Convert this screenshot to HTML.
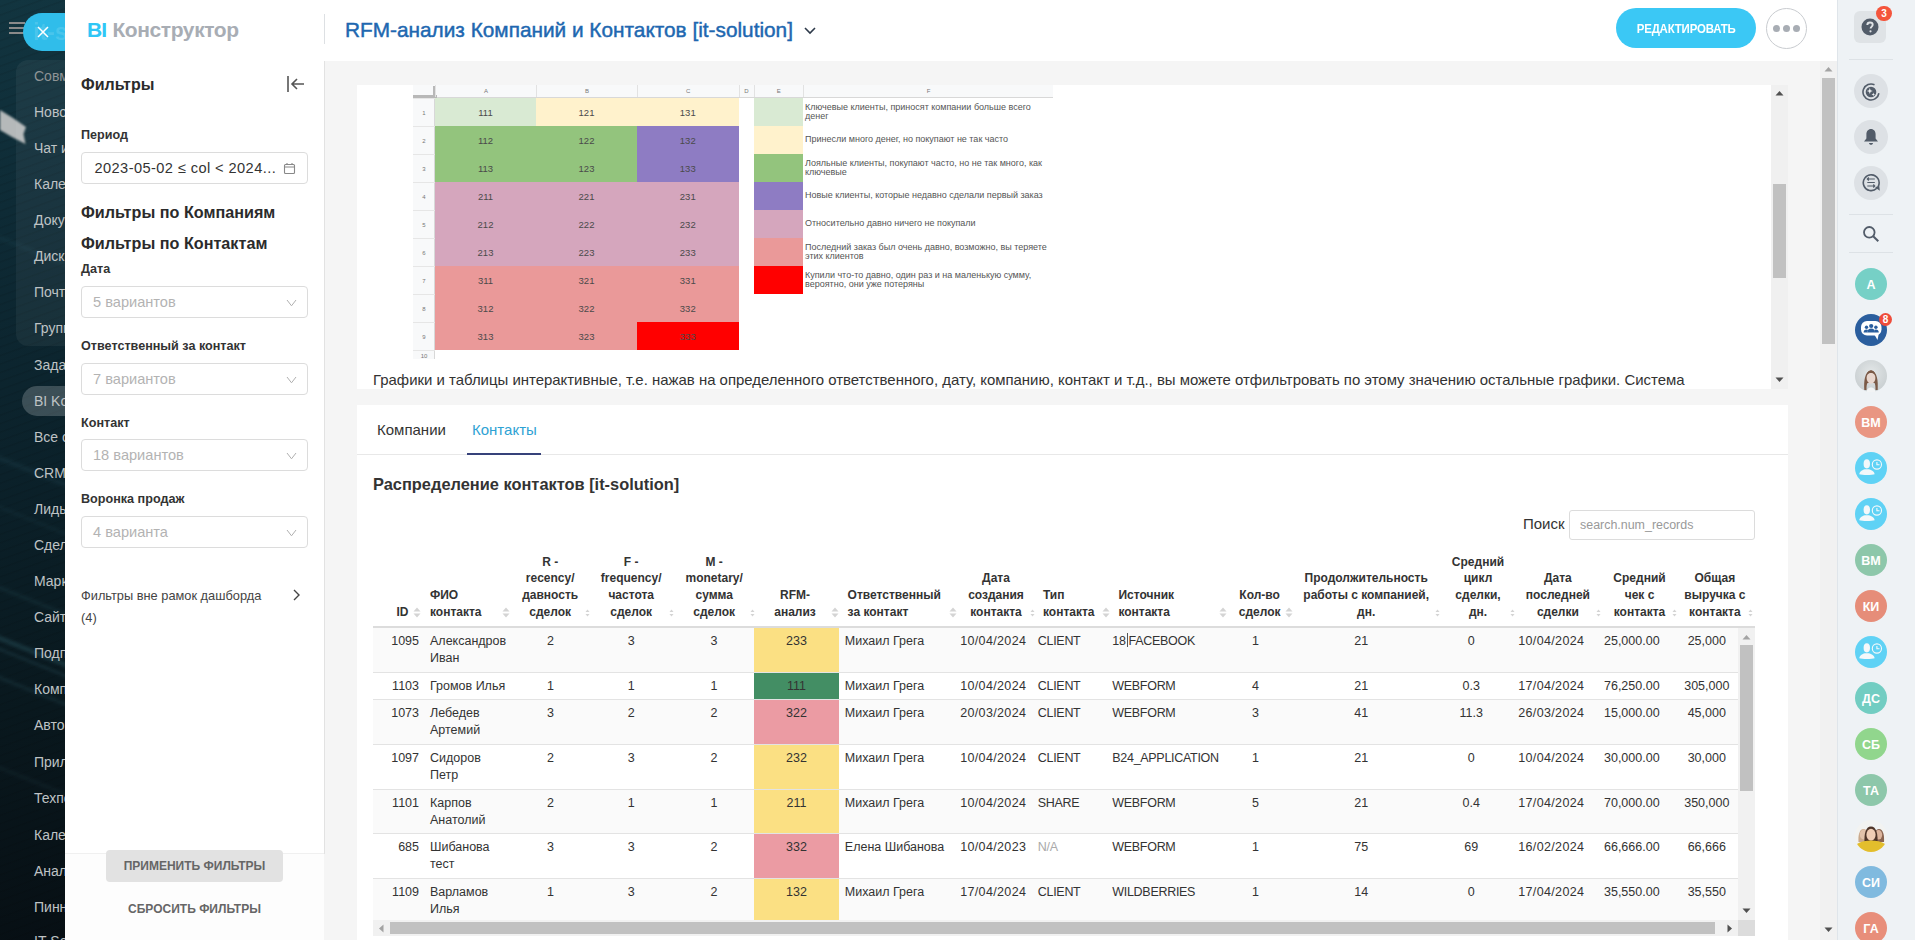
<!DOCTYPE html><html><head><meta charset="utf-8"><style>
*{box-sizing:border-box;margin:0;padding:0}
html,body{width:1915px;height:940px;overflow:hidden;font-family:"Liberation Sans",sans-serif;background:#0d1e26;position:relative}
.ab{position:absolute;white-space:nowrap}
#bg{left:0;top:0;width:65px;height:940px;background:linear-gradient(170deg,#123540 0%,#0e2b36 22%,#0b212a 50%,#09181e 75%,#070f14 100%);overflow:hidden}
#bg .it{position:absolute;left:34px;font-size:14px;color:#bfc3c5;white-space:nowrap}
.lbl{position:absolute;left:81px;font-size:12.6px;font-weight:bold;color:#333;white-space:nowrap;margin-top:1px}
.sel{position:absolute;left:81px;width:227px;height:32px;border:1px solid #dcdcdc;border-radius:4px;background:#fff}
.sel span{position:absolute;left:11px;top:7px;font-size:14.6px;color:#b3b3b3;white-space:nowrap}
.chev{position:absolute;left:204px;top:11.5px}
.h3{position:absolute;left:81px;font-size:16.2px;font-weight:bold;color:#2b2b2b;white-space:nowrap}
.sc{position:absolute;display:block}
.th{position:absolute;font-size:12px;font-weight:bold;color:#333;line-height:16.8px;white-space:nowrap}
.td{position:absolute;font-size:12.5px;color:#333;line-height:16.7px;white-space:nowrap}
.av{position:absolute;left:1855px;width:32px;height:32px;border-radius:50%;color:#fff;font-weight:bold;font-size:12.5px;text-align:center;line-height:35px;overflow:hidden}
.ic{position:absolute;left:1854px;width:34px;height:34px;border-radius:50%;background:#dde1e5}
.ss{position:absolute;font-size:9.5px;color:#4a4a4a;text-align:center;line-height:28px;padding-top:1.5px}
.lg{position:absolute;left:805px;font-size:9px;color:#555;line-height:9.4px;white-space:nowrap}
</style></head><body>
<div id="bg" class="ab">
<div class="ab" style="left:0;top:0;width:65px;height:940px;background:repeating-linear-gradient(160deg,rgba(255,255,255,0) 0px,rgba(255,255,255,0) 5px,rgba(0,0,0,0.09) 6px,rgba(255,255,255,0) 8px)"></div>
<svg class="ab" style="left:0;top:105px" width="40" height="45" viewBox="0 0 40 45"><path d="M0 5L13 13L26 22L23.5 29L25.5 39L12 32L0 25Z" fill="#b5b9ba" style="filter:blur(1px)"/></svg>
<div class="ab" style="left:-20px;top:650px;width:110px;height:5px;background:rgba(70,130,145,0.22);transform:rotate(22deg);filter:blur(1.5px)"></div>
<div class="ab" style="left:-20px;top:662px;width:110px;height:3px;background:rgba(70,130,145,0.16);transform:rotate(22deg);filter:blur(1.5px)"></div>
<div class="ab" style="left:-20px;top:690px;width:110px;height:4px;background:rgba(70,130,145,0.12);transform:rotate(22deg);filter:blur(1.5px)"></div>
<div class="ab" style="left:-20px;top:600px;width:110px;height:4px;background:rgba(70,130,145,0.1);transform:rotate(22deg);filter:blur(1.5px)"></div>
<div class="ab" style="left:-20px;top:470px;width:110px;height:5px;background:rgba(70,130,145,0.1);transform:rotate(22deg);filter:blur(1.5px)"></div>
<div class="ab" style="left:-20px;top:520px;width:110px;height:3px;background:rgba(70,130,145,0.08);transform:rotate(22deg);filter:blur(1.5px)"></div>
<div class="ab" style="left:-20px;top:780px;width:110px;height:4px;background:rgba(70,130,145,0.07);transform:rotate(22deg);filter:blur(1.5px)"></div>
<div class="ab" style="left:-20px;top:250px;width:110px;height:4px;background:rgba(70,130,145,0.08);transform:rotate(22deg);filter:blur(1.5px)"></div>
<div class="ab" style="left:16px;top:60px;width:60px;height:286px;background:rgba(255,255,255,0.05);border-radius:12px"></div>
<div class="ab" style="left:22px;top:386px;width:60px;height:30px;background:rgba(255,255,255,0.2);border-radius:15px"></div>
<div class="ab" style="left:9px;top:22px;width:16px;height:2px;background:#8a8a8a"></div>
<div class="ab" style="left:9px;top:27px;width:16px;height:2px;background:#8a8a8a"></div>
<div class="ab" style="left:9px;top:32px;width:16px;height:2px;background:#8a8a8a"></div>
<div class="it" style="top:68px;color:#8f9496">Совместная</div>
<div class="it" style="top:104px">Новости</div>
<div class="it" style="top:140px">Чат и звонки</div>
<div class="it" style="top:176px">Календарь</div>
<div class="it" style="top:212px">Документы</div>
<div class="it" style="top:248px">Диск</div>
<div class="it" style="top:284px">Почта</div>
<div class="it" style="top:320px">Группы</div>
<div class="it" style="top:357px">Задачи</div>
<div class="it" style="top:393px">BI Konstr</div>
<div class="it" style="top:429px">Все сотр</div>
<div class="it" style="top:465px">CRM</div>
<div class="it" style="top:501px">Лиды</div>
<div class="it" style="top:537px">Сделки</div>
<div class="it" style="top:573px">Маркетинг</div>
<div class="it" style="top:609px">Сайты</div>
<div class="it" style="top:645px">Подписка</div>
<div class="it" style="top:681px">Компания</div>
<div class="it" style="top:717px">Автоматизация</div>
<div class="it" style="top:754px">Приложения</div>
<div class="it" style="top:790px">Техподдержка</div>
<div class="it" style="top:827px">Календарь</div>
<div class="it" style="top:863px">Аналитика</div>
<div class="it" style="top:899px">Пинн</div>
<div class="it" style="top:933px">IT-Solution</div>
</div>
<div class="ab" style="left:23px;top:13px;width:60px;height:38px;background:#30bdea;border-radius:19px"></div>
<div class="ab" style="left:33px;top:19px;width:32px;overflow:hidden;font-size:23px;font-weight:bold;color:rgba(255,255,255,0.13)">it-solution</div>
<svg class="ab" style="left:37px;top:26px" width="12" height="12" viewBox="0 0 12 12"><path d="M1 1L11 11M11 1L1 11" stroke="#fff" stroke-width="1.5"/></svg>
<div class="ab" style="left:65px;top:0;width:1772px;height:940px;background:#fff"></div>
<div class="ab" style="left:1837px;top:0;width:78px;height:940px;background:#eef2f5;border-left:1px solid #dfe5ea"></div>
<div class="ab" style="left:324px;top:61px;width:1513px;height:879px;background:#f5f5f5"></div>
<div class="ab" style="left:324px;top:61px;width:1px;height:793px;background:#e2e2e2"></div>
<div class="ab" style="left:87px;top:18px;font-size:21px;font-weight:bold;letter-spacing:-0.4px"><span style="color:#2fc6f6;letter-spacing:-0.8px">BI</span><span style="display:inline-block;width:6px"></span><span style="color:#a8adb4">Конструктор</span></div>
<div class="ab" style="left:324px;top:14px;width:1px;height:30px;background:#dde0e3"></div>
<div class="ab" style="left:345px;top:18px;font-size:20.8px;color:#2067b0;-webkit-text-stroke:0.45px #2067b0">RFM-анализ Компаний и Контактов [it-solution]</div>
<svg class="ab" style="left:803px;top:26px" width="14" height="10" viewBox="0 0 14 10"><path d="M2 2L7 7L12 2" stroke="#2e3a4a" stroke-width="1.6" fill="none"/></svg>
<div class="ab" style="left:1616px;top:8px;width:140px;height:40px;background:#3bc8f5;border-radius:20px;color:#fff;font-size:13px;font-weight:bold;text-align:center;line-height:41.5px;letter-spacing:-0.2px"><span style="display:inline-block;transform:scaleX(0.88)">РЕДАКТИРОВАТЬ</span></div>
<div class="ab" style="left:1766px;top:8px;width:41px;height:41px;border:1px solid #c9ccd0;border-radius:50%"></div>
<div class="ab" style="left:1773px;top:25px;width:7px;height:7px;border-radius:50%;background:#a8adb4"></div>
<div class="ab" style="left:1783px;top:25px;width:7px;height:7px;border-radius:50%;background:#a8adb4"></div>
<div class="ab" style="left:1793px;top:25px;width:7px;height:7px;border-radius:50%;background:#a8adb4"></div>
<div class="ab" style="left:81px;top:76px;font-size:16px;font-weight:bold;color:#2b2b2b">Фильтры</div>
<svg class="ab" style="left:286px;top:75px" width="20" height="18" viewBox="0 0 20 18"><path d="M2 1V17" stroke="#555" stroke-width="1.6"/><path d="M18 9H6M11 4L6 9L11 14" stroke="#555" stroke-width="1.6" fill="none"/></svg>
<div class="lbl" style="top:127px">Период</div>
<div class="sel" style="top:152px"><span style="color:#333;letter-spacing:0.42px;top:7px;left:12.5px">2023-05-02 ≤ col &lt; 2024...</span><svg class="ab" style="left:201px;top:9px" width="13" height="13" viewBox="0 0 13 13"><rect x="1.5" y="2.5" width="10" height="9" rx="1" fill="none" stroke="#888" stroke-width="1.1"/><path d="M1.5 5H11.5M4 1V3M9 1V3" stroke="#888" stroke-width="1.1"/></svg></div>
<div class="h3" style="top:203px">Фильтры по Компаниям</div>
<div class="h3" style="top:234px">Фильтры по Контактам</div>
<div class="lbl" style="top:261px">Дата</div>
<div class="sel" style="top:286px"><span>5 вариантов</span><svg class="chev" width="11" height="8" viewBox="0 0 11 8"><path d="M1 1L5.5 6.8L10 1" stroke="#b0b0b0" stroke-width="1" fill="none"/></svg></div>
<div class="lbl" style="top:338px">Ответственный за контакт</div>
<div class="sel" style="top:363px"><span>7 вариантов</span><svg class="chev" width="11" height="8" viewBox="0 0 11 8"><path d="M1 1L5.5 6.8L10 1" stroke="#b0b0b0" stroke-width="1" fill="none"/></svg></div>
<div class="lbl" style="top:415px">Контакт</div>
<div class="sel" style="top:439px"><span>18 вариантов</span><svg class="chev" width="11" height="8" viewBox="0 0 11 8"><path d="M1 1L5.5 6.8L10 1" stroke="#b0b0b0" stroke-width="1" fill="none"/></svg></div>
<div class="lbl" style="top:491px">Воронка продаж</div>
<div class="sel" style="top:516px"><span>4 варианта</span><svg class="chev" width="11" height="8" viewBox="0 0 11 8"><path d="M1 1L5.5 6.8L10 1" stroke="#b0b0b0" stroke-width="1" fill="none"/></svg></div>
<div class="ab" style="left:81px;top:588px;font-size:12.8px;color:#444">Фильтры вне рамок дашборда</div>
<div class="ab" style="left:81px;top:610px;font-size:12.8px;color:#444">(4)</div>
<svg class="ab" style="left:292px;top:589px" width="10" height="12" viewBox="0 0 10 12"><path d="M2 1L7 6L2 11" stroke="#444" stroke-width="1.4" fill="none"/></svg>
<div class="ab" style="left:65px;top:853px;width:259px;height:87px;background:#fdfdfd;border-top:1px solid #f0f0f0"></div>
<div class="ab" style="left:106px;top:850px;width:177px;height:32px;background:#e2e2e2;border-radius:4px;font-size:12px;font-weight:bold;color:#666;text-align:center;line-height:32px">ПРИМЕНИТЬ ФИЛЬТРЫ</div>
<div class="ab" style="left:106px;top:902px;width:177px;font-size:12px;font-weight:bold;color:#666;text-align:center">СБРОСИТЬ ФИЛЬТРЫ</div>
<div class="ab" style="left:1820px;top:61px;width:17px;height:879px;background:#f1f1f1"></div>
<div class="ab" style="left:1822px;top:78px;width:13px;height:266px;background:#c1c1c1"></div>
<svg class="ab" style="left:1824px;top:66px" width="9" height="6" viewBox="0 0 9 6"><path d="M0.5 5.5L4.5 1L8.5 5.5Z" fill="#a3a3a3"/></svg>
<svg class="ab" style="left:1824px;top:927px" width="9" height="6" viewBox="0 0 9 6"><path d="M0.5 0.5L4.5 5L8.5 0.5Z" fill="#505050"/></svg>
<div class="ab" style="left:357px;top:85px;width:1431px;height:304px;background:#fff;overflow:hidden">
</div>
<div class="ab" style="left:413px;top:85px;width:640px;height:274px;background:#fff"></div>
<div class="ab" style="left:413px;top:85px;width:640px;height:13px;background:#f8f9fa;border-bottom:1px solid #d8d8d8"></div>
<div class="ab" style="left:413px;top:97px;width:22px;height:262px;background:#f8f9fa;border-right:1px solid #d8d8d8"></div>
<div class="ab" style="left:413px;top:95px;width:24px;height:3px;background:#b8b8b8"></div>
<div class="ab" style="left:433px;top:86px;width:3px;height:12px;background:#b8b8b8"></div>
<div class="ab" style="left:435px;top:85px;width:101px;height:12px;border-left:1px solid #e2e2e2;font-size:6px;color:#777;text-align:center;line-height:13px">A</div>
<div class="ab" style="left:536px;top:85px;width:101px;height:12px;border-left:1px solid #e2e2e2;font-size:6px;color:#777;text-align:center;line-height:13px">B</div>
<div class="ab" style="left:637px;top:85px;width:101.5px;height:12px;border-left:1px solid #e2e2e2;font-size:6px;color:#777;text-align:center;line-height:13px">C</div>
<div class="ab" style="left:738.5px;top:85px;width:15.0px;height:12px;border-left:1px solid #e2e2e2;font-size:6px;color:#777;text-align:center;line-height:13px">D</div>
<div class="ab" style="left:753.5px;top:85px;width:49.5px;height:12px;border-left:1px solid #e2e2e2;font-size:6px;color:#777;text-align:center;line-height:13px">E</div>
<div class="ab" style="left:803px;top:85px;width:250px;height:12px;border-left:1px solid #e2e2e2;font-size:6px;color:#777;text-align:center;line-height:13px">F</div>
<div class="ab" style="left:413px;top:97.5px;width:22px;height:28.0px;border-top:1px solid #e6e6e6;font-size:6px;color:#777;text-align:center;line-height:28.0px">1</div>
<div class="ab" style="left:413px;top:125.5px;width:22px;height:28.0px;border-top:1px solid #e6e6e6;font-size:6px;color:#777;text-align:center;line-height:28.0px">2</div>
<div class="ab" style="left:413px;top:153.5px;width:22px;height:28.0px;border-top:1px solid #e6e6e6;font-size:6px;color:#777;text-align:center;line-height:28.0px">3</div>
<div class="ab" style="left:413px;top:181.5px;width:22px;height:28.0px;border-top:1px solid #e6e6e6;font-size:6px;color:#777;text-align:center;line-height:28.0px">4</div>
<div class="ab" style="left:413px;top:209.5px;width:22px;height:28.0px;border-top:1px solid #e6e6e6;font-size:6px;color:#777;text-align:center;line-height:28.0px">5</div>
<div class="ab" style="left:413px;top:237.5px;width:22px;height:28.0px;border-top:1px solid #e6e6e6;font-size:6px;color:#777;text-align:center;line-height:28.0px">6</div>
<div class="ab" style="left:413px;top:265.5px;width:22px;height:28.0px;border-top:1px solid #e6e6e6;font-size:6px;color:#777;text-align:center;line-height:28.0px">7</div>
<div class="ab" style="left:413px;top:293.5px;width:22px;height:28.0px;border-top:1px solid #e6e6e6;font-size:6px;color:#777;text-align:center;line-height:28.0px">8</div>
<div class="ab" style="left:413px;top:321.5px;width:22px;height:28.0px;border-top:1px solid #e6e6e6;font-size:6px;color:#777;text-align:center;line-height:28.0px">9</div>
<div class="ab" style="left:413px;top:349.5px;width:22px;height:10.0px;border-top:1px solid #e6e6e6;font-size:6px;color:#777;text-align:center;line-height:10.0px">10</div>
<div class="ss" style="left:435px;top:97.5px;width:101px;height:28.0px;background:#d9ead3">111</div>
<div class="ss" style="left:536px;top:97.5px;width:101px;height:28.0px;background:#fff2cc">121</div>
<div class="ss" style="left:637px;top:97.5px;width:101.5px;height:28.0px;background:#fff2cc">131</div>
<div class="ss" style="left:435px;top:125.5px;width:101px;height:28.0px;background:#93c47d">112</div>
<div class="ss" style="left:536px;top:125.5px;width:101px;height:28.0px;background:#93c47d">122</div>
<div class="ss" style="left:637px;top:125.5px;width:101.5px;height:28.0px;background:#8e7cc3">132</div>
<div class="ss" style="left:435px;top:153.5px;width:101px;height:28.0px;background:#93c47d">113</div>
<div class="ss" style="left:536px;top:153.5px;width:101px;height:28.0px;background:#93c47d">123</div>
<div class="ss" style="left:637px;top:153.5px;width:101.5px;height:28.0px;background:#8e7cc3">133</div>
<div class="ss" style="left:435px;top:181.5px;width:101px;height:28.0px;background:#d5a6bd">211</div>
<div class="ss" style="left:536px;top:181.5px;width:101px;height:28.0px;background:#d5a6bd">221</div>
<div class="ss" style="left:637px;top:181.5px;width:101.5px;height:28.0px;background:#d5a6bd">231</div>
<div class="ss" style="left:435px;top:209.5px;width:101px;height:28.0px;background:#d5a6bd">212</div>
<div class="ss" style="left:536px;top:209.5px;width:101px;height:28.0px;background:#d5a6bd">222</div>
<div class="ss" style="left:637px;top:209.5px;width:101.5px;height:28.0px;background:#d5a6bd">232</div>
<div class="ss" style="left:435px;top:237.5px;width:101px;height:28.0px;background:#d5a6bd">213</div>
<div class="ss" style="left:536px;top:237.5px;width:101px;height:28.0px;background:#d5a6bd">223</div>
<div class="ss" style="left:637px;top:237.5px;width:101.5px;height:28.0px;background:#d5a6bd">233</div>
<div class="ss" style="left:435px;top:265.5px;width:101px;height:28.0px;background:#ea9999">311</div>
<div class="ss" style="left:536px;top:265.5px;width:101px;height:28.0px;background:#ea9999">321</div>
<div class="ss" style="left:637px;top:265.5px;width:101.5px;height:28.0px;background:#ea9999">331</div>
<div class="ss" style="left:435px;top:293.5px;width:101px;height:28.0px;background:#ea9999">312</div>
<div class="ss" style="left:536px;top:293.5px;width:101px;height:28.0px;background:#ea9999">322</div>
<div class="ss" style="left:637px;top:293.5px;width:101.5px;height:28.0px;background:#ea9999">332</div>
<div class="ss" style="left:435px;top:321.5px;width:101px;height:28.0px;background:#ea9999">313</div>
<div class="ss" style="left:536px;top:321.5px;width:101px;height:28.0px;background:#ea9999">323</div>
<div class="ss" style="left:637px;top:321.5px;width:101.5px;height:28.0px;background:#ff0000">333</div>
<div class="ab" style="left:753.5px;top:97.5px;width:49.5px;height:28.0px;background:#d9ead3"></div>
<div class="ab" style="left:753.5px;top:125.5px;width:49.5px;height:28.0px;background:#fff2cc"></div>
<div class="ab" style="left:753.5px;top:153.5px;width:49.5px;height:28.0px;background:#93c47d"></div>
<div class="ab" style="left:753.5px;top:181.5px;width:49.5px;height:28.0px;background:#8e7cc3"></div>
<div class="ab" style="left:753.5px;top:209.5px;width:49.5px;height:28.0px;background:#d5a6bd"></div>
<div class="ab" style="left:753.5px;top:237.5px;width:49.5px;height:28.0px;background:#ea9999"></div>
<div class="ab" style="left:753.5px;top:265.5px;width:49.5px;height:28.0px;background:#ff0000"></div>
<div class="lg" style="top:103.0px">Ключевые клиенты, приносят компании больше всего<br>денег</div>
<div class="lg" style="top:135.0px">Принесли много денег, но покупают не так часто</div>
<div class="lg" style="top:159.0px">Лояльные клиенты, покупают часто, но не так много, как<br>ключевые</div>
<div class="lg" style="top:191.0px">Новые клиенты, которые недавно сделали первый заказ</div>
<div class="lg" style="top:219.0px">Относительно давно ничего не покупали</div>
<div class="lg" style="top:243.0px">Последний заказ был очень давно, возможно, вы теряете<br>этих клиентов</div>
<div class="lg" style="top:271.0px">Купили что-то давно, один раз и на маленькую сумму,<br>вероятно, они уже потеряны</div>
<div class="ab" style="left:373px;top:371px;font-size:14.94px;color:#333;height:18px;overflow:hidden">Графики и таблицы интерактивные, т.е. нажав на определенного ответственного, дату, компанию, контакт и т.д., вы можете отфильтровать по этому значению остальные графики. Система</div>
<div class="ab" style="left:1771px;top:85px;width:17px;height:304px;background:#f0f0f0"></div>
<div class="ab" style="left:1773px;top:184px;width:13px;height:94px;background:#c1c1c1"></div>
<svg class="ab" style="left:1775px;top:90px" width="9" height="6" viewBox="0 0 9 6"><path d="M0.5 5.5L4.5 1L8.5 5.5Z" fill="#505050"/></svg>
<svg class="ab" style="left:1775px;top:377px" width="9" height="6" viewBox="0 0 9 6"><path d="M0.5 0.5L4.5 5L8.5 0.5Z" fill="#505050"/></svg>
<div class="ab" style="left:357px;top:405px;width:1431px;height:535px;background:#fff"></div>
<div class="ab" style="left:377px;top:421px;font-size:15px;color:#333">Компании</div>
<div class="ab" style="left:472px;top:421px;font-size:15px;color:#2ea2d4">Контакты</div>
<div class="ab" style="left:357px;top:454px;width:1431px;height:1px;background:#e8e8e8"></div>
<div class="ab" style="left:467px;top:453px;width:74px;height:2px;background:#36427a"></div>
<div class="ab" style="left:373px;top:475px;font-size:16.4px;font-weight:bold;color:#333">Распределение контактов [it-solution]</div>
<div class="ab" style="left:1523px;top:515px;font-size:15px;color:#333">Поиск</div>
<div class="ab" style="left:1569px;top:510px;width:186px;height:30px;border:1px solid #dcdcdc;border-radius:3px"></div>
<div class="ab" style="left:1580px;top:517.5px;font-size:12.45px;color:#999">search.num_records</div>
<div class="th" style="left:108.5px;width:300px;text-align:right;top:603.9px">ID</div>
<svg class="sc" style="left:413px;top:607px" width="8" height="11" viewBox="0 0 8 11"><path d="M0.5 4.5L4 0.5L7.5 4.5Z M0.5 6.5L4 10.5L7.5 6.5Z" fill="#d4d4d4"/></svg>
<div class="th" style="left:430px;top:587.1px">ФИО<br>контакта</div>
<svg class="sc" style="left:502px;top:607px" width="8" height="11" viewBox="0 0 8 11"><path d="M0.5 4.5L4 0.5L7.5 4.5Z M0.5 6.5L4 10.5L7.5 6.5Z" fill="#d4d4d4"/></svg>
<div class="th" style="left:400.20000000000005px;width:300px;text-align:center;top:553.5px">R -<br>recency/<br>давность<br>сделок</div>
<svg class="sc" style="left:584.5px;top:609px" width="5" height="8" viewBox="0 0 5 8"><path d="M0.5 3L2.5 0.5L4.5 3Z M0.5 5L2.5 7.5L4.5 5Z" fill="#d4d4d4"/></svg>
<div class="th" style="left:481.20000000000005px;width:300px;text-align:center;top:553.5px">F -<br>frequency/<br>частота<br>сделок</div>
<svg class="sc" style="left:668.5px;top:609px" width="5" height="8" viewBox="0 0 5 8"><path d="M0.5 3L2.5 0.5L4.5 3Z M0.5 5L2.5 7.5L4.5 5Z" fill="#d4d4d4"/></svg>
<div class="th" style="left:564.2px;width:300px;text-align:center;top:553.5px">M -<br>monetary/<br>сумма<br>сделок</div>
<svg class="sc" style="left:749.5px;top:609px" width="5" height="8" viewBox="0 0 5 8"><path d="M0.5 3L2.5 0.5L4.5 3Z M0.5 5L2.5 7.5L4.5 5Z" fill="#d4d4d4"/></svg>
<div class="th" style="left:645px;width:300px;text-align:center;top:587.1px">RFM-<br>анализ</div>
<svg class="sc" style="left:831px;top:607px" width="8" height="11" viewBox="0 0 8 11"><path d="M0.5 4.5L4 0.5L7.5 4.5Z M0.5 6.5L4 10.5L7.5 6.5Z" fill="#d4d4d4"/></svg>
<div class="th" style="left:847.6px;top:587.1px">Ответственный<br>за контакт</div>
<svg class="sc" style="left:949px;top:607px" width="8" height="11" viewBox="0 0 8 11"><path d="M0.5 4.5L4 0.5L7.5 4.5Z M0.5 6.5L4 10.5L7.5 6.5Z" fill="#d4d4d4"/></svg>
<div class="th" style="left:846px;width:300px;text-align:center;top:570.3px">Дата<br>создания<br>контакта</div>
<svg class="sc" style="left:1030.0px;top:609px" width="5" height="8" viewBox="0 0 5 8"><path d="M0.5 3L2.5 0.5L4.5 3Z M0.5 5L2.5 7.5L4.5 5Z" fill="#d4d4d4"/></svg>
<div class="th" style="left:1043px;top:587.1px">Тип<br>контакта</div>
<svg class="sc" style="left:1102px;top:607px" width="8" height="11" viewBox="0 0 8 11"><path d="M0.5 4.5L4 0.5L7.5 4.5Z M0.5 6.5L4 10.5L7.5 6.5Z" fill="#d4d4d4"/></svg>
<div class="th" style="left:1118.4px;top:587.1px">Источник<br>контакта</div>
<svg class="sc" style="left:1218.8px;top:607px" width="8" height="11" viewBox="0 0 8 11"><path d="M0.5 4.5L4 0.5L7.5 4.5Z M0.5 6.5L4 10.5L7.5 6.5Z" fill="#d4d4d4"/></svg>
<div class="th" style="left:1109.6px;width:300px;text-align:center;top:587.1px">Кол-во<br>сделок</div>
<svg class="sc" style="left:1284.6px;top:607px" width="8" height="11" viewBox="0 0 8 11"><path d="M0.5 4.5L4 0.5L7.5 4.5Z M0.5 6.5L4 10.5L7.5 6.5Z" fill="#d4d4d4"/></svg>
<div class="th" style="left:1216.2px;width:300px;text-align:center;top:570.3px">Продолжительность<br>работы с компанией,<br>дн.</div>
<svg class="sc" style="left:1434.8px;top:609px" width="5" height="8" viewBox="0 0 5 8"><path d="M0.5 3L2.5 0.5L4.5 3Z M0.5 5L2.5 7.5L4.5 5Z" fill="#d4d4d4"/></svg>
<div class="th" style="left:1328px;width:300px;text-align:center;top:553.5px">Средний<br>цикл<br>сделки,<br>дн.</div>
<svg class="sc" style="left:1510.2px;top:609px" width="5" height="8" viewBox="0 0 5 8"><path d="M0.5 3L2.5 0.5L4.5 3Z M0.5 5L2.5 7.5L4.5 5Z" fill="#d4d4d4"/></svg>
<div class="th" style="left:1407.9px;width:300px;text-align:center;top:570.3px">Дата<br>последней<br>сделки</div>
<svg class="sc" style="left:1595.7px;top:609px" width="5" height="8" viewBox="0 0 5 8"><path d="M0.5 3L2.5 0.5L4.5 3Z M0.5 5L2.5 7.5L4.5 5Z" fill="#d4d4d4"/></svg>
<div class="th" style="left:1489.5px;width:300px;text-align:center;top:570.3px">Средний<br>чек с<br>контакта</div>
<svg class="sc" style="left:1672.1px;top:609px" width="5" height="8" viewBox="0 0 5 8"><path d="M0.5 3L2.5 0.5L4.5 3Z M0.5 5L2.5 7.5L4.5 5Z" fill="#d4d4d4"/></svg>
<div class="th" style="left:1564.9px;width:300px;text-align:center;top:570.3px">Общая<br>выручка с<br>контакта</div>
<svg class="sc" style="left:1747.5px;top:609px" width="5" height="8" viewBox="0 0 5 8"><path d="M0.5 3L2.5 0.5L4.5 3Z M0.5 5L2.5 7.5L4.5 5Z" fill="#d4d4d4"/></svg>
<div class="ab" style="left:373px;top:626px;width:1382px;height:2px;background:#dcdcdc"></div>
<div class="ab" style="left:373px;top:628px;width:1366px;height:44px;background:#fafafa"></div>
<div class="ab" style="left:373px;top:672px;width:1366px;height:1px;background:#e3e3e3"></div>
<div class="ab" style="left:754px;top:628px;width:85px;height:44px;background:#fbe083"></div>
<div class="td" style="left:219px;width:200px;text-align:right;top:633.0px">1095</div>
<div class="td" style="left:430px;top:633.0px">Александров<br>Иван</div>
<div class="td" style="left:450.6px;width:200px;text-align:center;top:633.0px">2</div>
<div class="td" style="left:531.3px;width:200px;text-align:center;top:633.0px">3</div>
<div class="td" style="left:614px;width:200px;text-align:center;top:633.0px">3</div>
<div class="td" style="left:696.5px;width:200px;text-align:center;top:633.0px">233</div>
<div class="td" style="left:844.8px;top:633.0px">Михаил Грега</div>
<div class="td" style="left:960.2px;top:633.0px;letter-spacing:0.35px">10/04/2024</div>
<div class="td" style="left:1037.8px;top:633.0px;letter-spacing:-0.3px">CLIENT</div>
<div class="td" style="left:1112.3px;top:633.0px;letter-spacing:-0.3px">18<span style="display:inline-block;width:1px;height:14px;background:#555;vertical-align:-2px;margin:0 1px"></span>FACEBOOK</div>
<div class="td" style="left:1155.4px;width:200px;text-align:center;top:633.0px">1</div>
<div class="td" style="left:1261.2px;width:200px;text-align:center;top:633.0px">21</div>
<div class="td" style="left:1371.2px;width:200px;text-align:center;top:633.0px">0</div>
<div class="td" style="left:1451.3px;width:200px;text-align:center;top:633.0px;letter-spacing:0.35px">10/04/2024</div>
<div class="td" style="left:1531.8px;width:200px;text-align:center;top:633.0px">25,000.00</div>
<div class="td" style="left:1606.8px;width:200px;text-align:center;top:633.0px">25,000</div>
<div class="ab" style="left:373px;top:673px;width:1366px;height:26px;background:#fff"></div>
<div class="ab" style="left:373px;top:699px;width:1366px;height:1px;background:#e3e3e3"></div>
<div class="ab" style="left:754px;top:673px;width:85px;height:26px;background:#438e64"></div>
<div class="td" style="left:219px;width:200px;text-align:right;top:678.0px">1103</div>
<div class="td" style="left:430px;top:678.0px">Громов Илья</div>
<div class="td" style="left:450.6px;width:200px;text-align:center;top:678.0px">1</div>
<div class="td" style="left:531.3px;width:200px;text-align:center;top:678.0px">1</div>
<div class="td" style="left:614px;width:200px;text-align:center;top:678.0px">1</div>
<div class="td" style="left:696.5px;width:200px;text-align:center;top:678.0px">111</div>
<div class="td" style="left:844.8px;top:678.0px">Михаил Грега</div>
<div class="td" style="left:960.2px;top:678.0px;letter-spacing:0.35px">10/04/2024</div>
<div class="td" style="left:1037.8px;top:678.0px;letter-spacing:-0.3px">CLIENT</div>
<div class="td" style="left:1112.3px;top:678.0px;letter-spacing:-0.3px">WEBFORM</div>
<div class="td" style="left:1155.4px;width:200px;text-align:center;top:678.0px">4</div>
<div class="td" style="left:1261.2px;width:200px;text-align:center;top:678.0px">21</div>
<div class="td" style="left:1371.2px;width:200px;text-align:center;top:678.0px">0.3</div>
<div class="td" style="left:1451.3px;width:200px;text-align:center;top:678.0px;letter-spacing:0.35px">17/04/2024</div>
<div class="td" style="left:1531.8px;width:200px;text-align:center;top:678.0px">76,250.00</div>
<div class="td" style="left:1606.8px;width:200px;text-align:center;top:678.0px">305,000</div>
<div class="ab" style="left:373px;top:700px;width:1366px;height:44px;background:#fafafa"></div>
<div class="ab" style="left:373px;top:744px;width:1366px;height:1px;background:#e3e3e3"></div>
<div class="ab" style="left:754px;top:700px;width:85px;height:44px;background:#eb9ba3"></div>
<div class="td" style="left:219px;width:200px;text-align:right;top:705.0px">1073</div>
<div class="td" style="left:430px;top:705.0px">Лебедев<br>Артемий</div>
<div class="td" style="left:450.6px;width:200px;text-align:center;top:705.0px">3</div>
<div class="td" style="left:531.3px;width:200px;text-align:center;top:705.0px">2</div>
<div class="td" style="left:614px;width:200px;text-align:center;top:705.0px">2</div>
<div class="td" style="left:696.5px;width:200px;text-align:center;top:705.0px">322</div>
<div class="td" style="left:844.8px;top:705.0px">Михаил Грега</div>
<div class="td" style="left:960.2px;top:705.0px;letter-spacing:0.35px">20/03/2024</div>
<div class="td" style="left:1037.8px;top:705.0px;letter-spacing:-0.3px">CLIENT</div>
<div class="td" style="left:1112.3px;top:705.0px;letter-spacing:-0.3px">WEBFORM</div>
<div class="td" style="left:1155.4px;width:200px;text-align:center;top:705.0px">3</div>
<div class="td" style="left:1261.2px;width:200px;text-align:center;top:705.0px">41</div>
<div class="td" style="left:1371.2px;width:200px;text-align:center;top:705.0px">11.3</div>
<div class="td" style="left:1451.3px;width:200px;text-align:center;top:705.0px;letter-spacing:0.35px">26/03/2024</div>
<div class="td" style="left:1531.8px;width:200px;text-align:center;top:705.0px">15,000.00</div>
<div class="td" style="left:1606.8px;width:200px;text-align:center;top:705.0px">45,000</div>
<div class="ab" style="left:373px;top:745px;width:1366px;height:44px;background:#fff"></div>
<div class="ab" style="left:373px;top:789px;width:1366px;height:1px;background:#e3e3e3"></div>
<div class="ab" style="left:754px;top:745px;width:85px;height:44px;background:#fbe083"></div>
<div class="td" style="left:219px;width:200px;text-align:right;top:750.0px">1097</div>
<div class="td" style="left:430px;top:750.0px">Сидоров<br>Петр</div>
<div class="td" style="left:450.6px;width:200px;text-align:center;top:750.0px">2</div>
<div class="td" style="left:531.3px;width:200px;text-align:center;top:750.0px">3</div>
<div class="td" style="left:614px;width:200px;text-align:center;top:750.0px">2</div>
<div class="td" style="left:696.5px;width:200px;text-align:center;top:750.0px">232</div>
<div class="td" style="left:844.8px;top:750.0px">Михаил Грега</div>
<div class="td" style="left:960.2px;top:750.0px;letter-spacing:0.35px">10/04/2024</div>
<div class="td" style="left:1037.8px;top:750.0px;letter-spacing:-0.3px">CLIENT</div>
<div class="td" style="left:1112.3px;top:750.0px;letter-spacing:-0.3px">B24_APPLICATION</div>
<div class="td" style="left:1155.4px;width:200px;text-align:center;top:750.0px">1</div>
<div class="td" style="left:1261.2px;width:200px;text-align:center;top:750.0px">21</div>
<div class="td" style="left:1371.2px;width:200px;text-align:center;top:750.0px">0</div>
<div class="td" style="left:1451.3px;width:200px;text-align:center;top:750.0px;letter-spacing:0.35px">10/04/2024</div>
<div class="td" style="left:1531.8px;width:200px;text-align:center;top:750.0px">30,000.00</div>
<div class="td" style="left:1606.8px;width:200px;text-align:center;top:750.0px">30,000</div>
<div class="ab" style="left:373px;top:790px;width:1366px;height:43px;background:#fafafa"></div>
<div class="ab" style="left:373px;top:833px;width:1366px;height:1px;background:#e3e3e3"></div>
<div class="ab" style="left:754px;top:790px;width:85px;height:43px;background:#fbe083"></div>
<div class="td" style="left:219px;width:200px;text-align:right;top:795.0px">1101</div>
<div class="td" style="left:430px;top:795.0px">Карпов<br>Анатолий</div>
<div class="td" style="left:450.6px;width:200px;text-align:center;top:795.0px">2</div>
<div class="td" style="left:531.3px;width:200px;text-align:center;top:795.0px">1</div>
<div class="td" style="left:614px;width:200px;text-align:center;top:795.0px">1</div>
<div class="td" style="left:696.5px;width:200px;text-align:center;top:795.0px">211</div>
<div class="td" style="left:844.8px;top:795.0px">Михаил Грега</div>
<div class="td" style="left:960.2px;top:795.0px;letter-spacing:0.35px">10/04/2024</div>
<div class="td" style="left:1037.8px;top:795.0px;letter-spacing:-0.3px">SHARE</div>
<div class="td" style="left:1112.3px;top:795.0px;letter-spacing:-0.3px">WEBFORM</div>
<div class="td" style="left:1155.4px;width:200px;text-align:center;top:795.0px">5</div>
<div class="td" style="left:1261.2px;width:200px;text-align:center;top:795.0px">21</div>
<div class="td" style="left:1371.2px;width:200px;text-align:center;top:795.0px">0.4</div>
<div class="td" style="left:1451.3px;width:200px;text-align:center;top:795.0px;letter-spacing:0.35px">17/04/2024</div>
<div class="td" style="left:1531.8px;width:200px;text-align:center;top:795.0px">70,000.00</div>
<div class="td" style="left:1606.8px;width:200px;text-align:center;top:795.0px">350,000</div>
<div class="ab" style="left:373px;top:834px;width:1366px;height:44px;background:#fff"></div>
<div class="ab" style="left:373px;top:878px;width:1366px;height:1px;background:#e3e3e3"></div>
<div class="ab" style="left:754px;top:834px;width:85px;height:44px;background:#eb9ba3"></div>
<div class="td" style="left:219px;width:200px;text-align:right;top:839.0px">685</div>
<div class="td" style="left:430px;top:839.0px">Шибанова<br>тест</div>
<div class="td" style="left:450.6px;width:200px;text-align:center;top:839.0px">3</div>
<div class="td" style="left:531.3px;width:200px;text-align:center;top:839.0px">3</div>
<div class="td" style="left:614px;width:200px;text-align:center;top:839.0px">2</div>
<div class="td" style="left:696.5px;width:200px;text-align:center;top:839.0px">332</div>
<div class="td" style="left:844.8px;top:839.0px">Елена Шибанова</div>
<div class="td" style="left:960.2px;top:839.0px;letter-spacing:0.35px">10/04/2023</div>
<div class="td" style="left:1037.8px;top:839.0px;color:#aaa;letter-spacing:-0.3px">N/A</div>
<div class="td" style="left:1112.3px;top:839.0px;letter-spacing:-0.3px">WEBFORM</div>
<div class="td" style="left:1155.4px;width:200px;text-align:center;top:839.0px">1</div>
<div class="td" style="left:1261.2px;width:200px;text-align:center;top:839.0px">75</div>
<div class="td" style="left:1371.2px;width:200px;text-align:center;top:839.0px">69</div>
<div class="td" style="left:1451.3px;width:200px;text-align:center;top:839.0px;letter-spacing:0.35px">16/02/2024</div>
<div class="td" style="left:1531.8px;width:200px;text-align:center;top:839.0px">66,666.00</div>
<div class="td" style="left:1606.8px;width:200px;text-align:center;top:839.0px">66,666</div>
<div class="ab" style="left:373px;top:879px;width:1366px;height:42px;background:#fafafa"></div>
<div class="ab" style="left:754px;top:879px;width:85px;height:42px;background:#fbe083"></div>
<div class="td" style="left:219px;width:200px;text-align:right;top:884.0px">1109</div>
<div class="td" style="left:430px;top:884.0px">Варламов<br>Илья</div>
<div class="td" style="left:450.6px;width:200px;text-align:center;top:884.0px">1</div>
<div class="td" style="left:531.3px;width:200px;text-align:center;top:884.0px">3</div>
<div class="td" style="left:614px;width:200px;text-align:center;top:884.0px">2</div>
<div class="td" style="left:696.5px;width:200px;text-align:center;top:884.0px">132</div>
<div class="td" style="left:844.8px;top:884.0px">Михаил Грега</div>
<div class="td" style="left:960.2px;top:884.0px;letter-spacing:0.35px">17/04/2024</div>
<div class="td" style="left:1037.8px;top:884.0px;letter-spacing:-0.3px">CLIENT</div>
<div class="td" style="left:1112.3px;top:884.0px;letter-spacing:-0.3px">WILDBERRIES</div>
<div class="td" style="left:1155.4px;width:200px;text-align:center;top:884.0px">1</div>
<div class="td" style="left:1261.2px;width:200px;text-align:center;top:884.0px">14</div>
<div class="td" style="left:1371.2px;width:200px;text-align:center;top:884.0px">0</div>
<div class="td" style="left:1451.3px;width:200px;text-align:center;top:884.0px;letter-spacing:0.35px">17/04/2024</div>
<div class="td" style="left:1531.8px;width:200px;text-align:center;top:884.0px">35,550.00</div>
<div class="td" style="left:1606.8px;width:200px;text-align:center;top:884.0px">35,550</div>
<div class="ab" style="left:1738px;top:628px;width:17px;height:293px;background:#f1f1f1"></div>
<div class="ab" style="left:1740px;top:645px;width:13px;height:146px;background:#c1c1c1"></div>
<svg class="sc" style="left:1742px;top:634px" width="9" height="6" viewBox="0 0 9 6"><path d="M0.5 5.5L4.5 1L8.5 5.5Z" fill="#a3a3a3"/></svg>
<svg class="sc" style="left:1742px;top:908px" width="9" height="6" viewBox="0 0 9 6"><path d="M0.5 0.5L4.5 5L8.5 0.5Z" fill="#505050"/></svg>
<div class="ab" style="left:373px;top:920px;width:1365px;height:16px;background:#f1f1f1"></div>
<div class="ab" style="left:1738px;top:920px;width:17px;height:16px;background:#dcdcdc"></div>
<div class="ab" style="left:390px;top:922px;width:1325px;height:12px;background:#c1c1c1"></div>
<svg class="sc" style="left:378px;top:924px" width="6" height="9" viewBox="0 0 6 9"><path d="M5.5 0.5L1 4.5L5.5 8.5Z" fill="#a3a3a3"/></svg>
<svg class="sc" style="left:1727px;top:924px" width="6" height="9" viewBox="0 0 6 9"><path d="M0.5 0.5L5 4.5L0.5 8.5Z" fill="#505050"/></svg>
<div class="ab" style="left:1854px;top:11px;width:32px;height:32px;border-radius:6px;background:#dfe3e6"></div>
<svg class="sc" style="left:1861px;top:18px" width="18" height="18" viewBox="0 0 18 18"><circle cx="9" cy="9" r="8.5" fill="#525c69"/><path d="M6.3 7C6.3 5.3 7.5 4.5 9 4.5C10.6 4.5 11.7 5.4 11.7 6.8C11.7 8.5 9.6 8.7 9.6 10.5" stroke="#dfe3e6" stroke-width="1.9" fill="none"/><circle cx="9.5" cy="13.3" r="1.1" fill="#dfe3e6"/></svg>
<div class="ab" style="left:1876px;top:6px;width:16px;height:15px;border-radius:8px;background:#f4553c;color:#fff;font-size:10px;font-weight:bold;text-align:center;line-height:15px">3</div>
<div class="ab" style="left:1849px;top:59px;width:44px;height:1px;background:#dde2e6"></div>
<div class="ic" style="top:74px"></div>
<div class="ic" style="top:120px"></div>
<div class="ic" style="top:166px"></div>
<svg class="sc" style="left:1862px;top:83px" width="18" height="18" viewBox="0 0 18 18"><path d="M16.9 10.25A8 8 0 1 1 12.5 1.8" stroke="#525c69" stroke-width="1.6" fill="none"/><circle cx="9" cy="9" r="5.3" fill="#525c69"/><path d="M7.8 5L8.6 7.2L10.8 8L8.6 8.8L7.8 11L7 8.8L4.8 8L7 7.2Z" fill="#eef0f2"/><path d="M11.3 9.6L11.8 10.9L13.1 11.4L11.8 11.9L11.3 13.2L10.8 11.9L9.5 11.4L10.8 10.9Z" fill="#eef0f2"/></svg>
<svg class="sc" style="left:1863px;top:128px" width="16" height="18" viewBox="0 0 16 18"><path d="M8 1C5.2 1 3.4 3.3 3.4 6.3V10.6L1 13.5H15L12.6 10.6V6.3C12.6 3.3 10.8 1 8 1Z" fill="#525c69"/><path d="M6 15H10C10 16 9 16.8 8 16.8C7 16.8 6 16 6 15Z" fill="#525c69"/></svg>
<svg class="sc" style="left:1862px;top:173px" width="19" height="19" viewBox="0 0 19 19"><path d="M14.8 15.3A7.9 7.9 0 1 1 16.3 13.2" stroke="#525c69" stroke-width="1.6" fill="none"/><path d="M13.2 14.6L17.8 17.8L17.2 12.2Z" fill="#525c69"/><path d="M5.3 6H12.8M6.8 4.5L5.3 6L6.8 7.5M5.3 9.5H12.8M5.3 13H12.8M11.3 11.5L12.8 13L11.3 14.5" stroke="#525c69" stroke-width="1.1" fill="none"/></svg>
<div class="ab" style="left:1849px;top:214px;width:44px;height:1px;background:#dde2e6"></div>
<svg class="sc" style="left:1862px;top:225px" width="18" height="18" viewBox="0 0 18 18"><circle cx="7.3" cy="7.3" r="5.3" stroke="#525c69" stroke-width="1.8" fill="none"/><path d="M11.2 11.2L16.3 16.3" stroke="#525c69" stroke-width="2"/></svg>
<div class="ab" style="left:1849px;top:252px;width:44px;height:1px;background:#dde2e6"></div>
<div class="av" style="top:268px;background:#76d0c6">A</div>
<svg class="sc" style="left:1855px;top:314px" width="32" height="32" viewBox="0 0 32 32"><circle cx="16" cy="16" r="16" fill="#2a5e9e"/><rect x="6" y="7" width="20.5" height="14.5" rx="6" fill="#fff"/><path d="M18.5 19L22.5 26L24 18.5Z" fill="#fff"/><circle cx="16.2" cy="12" r="2.1" fill="#2a5e9e"/><path d="M12.3 18.6C12.3 15.8 14 14.6 16.2 14.6C18.4 14.6 20.1 15.8 20.1 18.6Z" fill="#2a5e9e"/><circle cx="11.5" cy="13.2" r="1.7" fill="#2a5e9e"/><path d="M8.6 18.6C8.6 16.4 9.8 15.4 11.5 15.4C12.2 15.4 12.7 15.6 13.1 15.9C12.6 16.6 12.4 17.5 12.4 18.6Z" fill="#2a5e9e"/><circle cx="20.9" cy="13.2" r="1.7" fill="#2a5e9e"/><path d="M23.8 18.6C23.8 16.4 22.6 15.4 20.9 15.4C20.2 15.4 19.7 15.6 19.3 15.9C19.8 16.6 20 17.5 20 18.6Z" fill="#2a5e9e"/></svg>
<div class="ab" style="left:1879px;top:313px;width:13px;height:13px;border-radius:50%;background:#ee4c3a;color:#fff;font-size:10px;font-weight:bold;text-align:center;line-height:13px">8</div>
<svg class="sc" style="left:1855px;top:360px" width="32" height="32" viewBox="0 0 32 32"><defs><radialGradient id="pg" cx="0.5" cy="0.4" r="0.6"><stop offset="0" stop-color="#e3e7e8"/><stop offset="1" stop-color="#c9cfd1"/></radialGradient></defs><circle cx="16" cy="16" r="16" fill="url(#pg)"/><path d="M9.3 30C8.8 21 9.5 12 16 10C22.5 12 23.2 21 22.7 30L20.5 30C20.5 26 20.3 24 19.5 23H12.5C11.7 24 11.5 26 11.5 30Z" fill="#7b5a47"/><ellipse cx="16" cy="18" rx="4.4" ry="5.8" fill="#e9d7ce"/><path d="M11.6 15C12 11.5 14 11 16 11C18 11 20 11.5 20.4 15C19 13.5 17.5 13 16 13C14.5 13 13 13.5 11.6 15Z" fill="#7b5a47"/><path d="M11.5 32C12 28.5 14 27.5 16 27.5C18 27.5 20 28.5 20.5 32Z" fill="#f2f4f5"/></svg>
<div class="av" style="top:406px;background:#e99682">ВМ</div>
<svg class="sc" style="left:1855px;top:452px" width="32" height="32" viewBox="0 0 32 32"><circle cx="16" cy="16" r="16" fill="#5fd2f5"/><ellipse cx="11.8" cy="11.8" rx="3.2" ry="4.6" fill="#f4f8fa"/><path d="M4.3 22.3C4.3 19.6 7.3 17.9 9.8 17.2H13.8C16.5 17.9 19.6 19.6 19.6 22.3C17 23.2 7 23.2 4.3 22.3Z" fill="#f4f8fa"/><circle cx="21.9" cy="12.5" r="4.6" fill="#5fd2f5" stroke="#f4f8fa" stroke-width="1.1"/><path d="M21.9 10.1V12.8H24.5" stroke="#f4f8fa" stroke-width="1.1" fill="none"/></svg>
<svg class="sc" style="left:1855px;top:498px" width="32" height="32" viewBox="0 0 32 32"><circle cx="16" cy="16" r="16" fill="#5fd2f5"/><ellipse cx="11.8" cy="11.8" rx="3.2" ry="4.6" fill="#f4f8fa"/><path d="M4.3 22.3C4.3 19.6 7.3 17.9 9.8 17.2H13.8C16.5 17.9 19.6 19.6 19.6 22.3C17 23.2 7 23.2 4.3 22.3Z" fill="#f4f8fa"/><circle cx="21.9" cy="12.5" r="4.6" fill="#5fd2f5" stroke="#f4f8fa" stroke-width="1.1"/><path d="M21.9 10.1V12.8H24.5" stroke="#f4f8fa" stroke-width="1.1" fill="none"/></svg>
<div class="av" style="top:544px;background:#8dc7aa">ВМ</div>
<div class="av" style="top:590px;background:#e68d79">КИ</div>
<svg class="sc" style="left:1855px;top:636px" width="32" height="32" viewBox="0 0 32 32"><circle cx="16" cy="16" r="16" fill="#5fd2f5"/><ellipse cx="11.8" cy="11.8" rx="3.2" ry="4.6" fill="#f4f8fa"/><path d="M4.3 22.3C4.3 19.6 7.3 17.9 9.8 17.2H13.8C16.5 17.9 19.6 19.6 19.6 22.3C17 23.2 7 23.2 4.3 22.3Z" fill="#f4f8fa"/><circle cx="21.9" cy="12.5" r="4.6" fill="#5fd2f5" stroke="#f4f8fa" stroke-width="1.1"/><path d="M21.9 10.1V12.8H24.5" stroke="#f4f8fa" stroke-width="1.1" fill="none"/></svg>
<div class="av" style="top:682px;background:#72cdc2">ДС</div>
<div class="av" style="top:728px;background:#91d68d">СБ</div>
<div class="av" style="top:774px;background:#8dc7aa">ТА</div>
<svg class="sc" style="left:1855px;top:820px" width="32" height="32" viewBox="0 0 32 32"><defs><clipPath id="cp2"><circle cx="16" cy="16" r="16"/></clipPath></defs><g clip-path="url(#cp2)"><rect width="32" height="32" fill="#f2f3f1"/><path d="M3.5 22C3 15 4.5 9 8.5 9C12.5 9 13.5 15 13 22Z" fill="#c9a88a"/><ellipse cx="8.6" cy="14.5" rx="3.8" ry="5" fill="#e2c3aa"/><path d="M19 22C18.5 15 20 9 24 9C28 9 29.5 15 29 22Z" fill="#8a6450"/><ellipse cx="23.6" cy="14.8" rx="3.6" ry="4.8" fill="#ddb59c"/><path d="M9.5 24C9 14 10.5 6.5 16 6.5C21.5 6.5 23 14 22.5 24Z" fill="#4e3528"/><ellipse cx="16" cy="14.8" rx="4.6" ry="6" fill="#efcdb4"/><path d="M1 24.5C6 21 11 20.5 16 20.5C21 20.5 26 21 31 24.5V32H1Z" fill="#e3be2c"/></g></svg>
<div class="av" style="top:866px;background:#80badf">СИ</div>
<div class="av" style="top:912px;background:#e88e7a">ГА</div>
</body></html>
